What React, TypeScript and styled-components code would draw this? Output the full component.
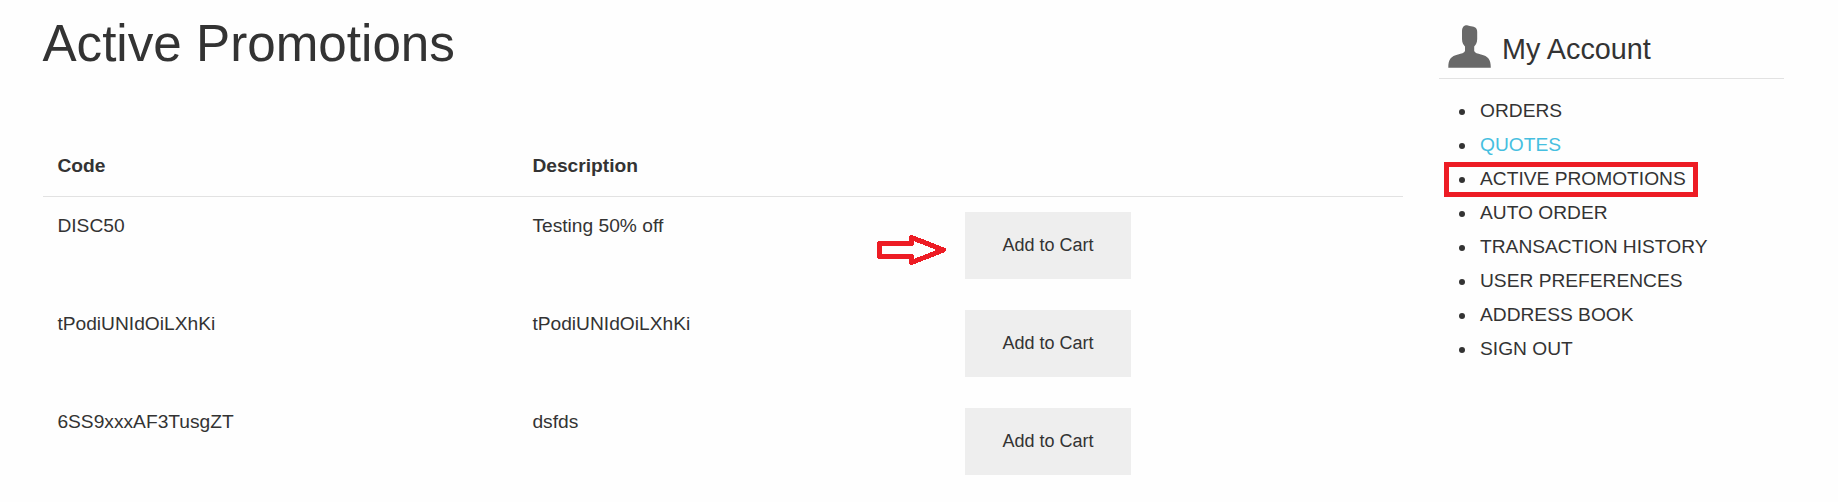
import React from "react";
import styled, { createGlobalStyle } from "styled-components";

const GlobalStyle = createGlobalStyle`
  *, *::before, *::after { box-sizing: border-box; }
  body {
    margin: 0;
    background: #fefefe;
    color: #333;
    font-family: Arial, "Liberation Sans", sans-serif;
    font-size: 19.2px;
  }
`;

const Page = styled.div`
  display: flex;
  align-items: flex-start;
  gap: 36px;
  width: 1838px;
  height: 502px;
  padding: 0 54px 0 43px;
  overflow: hidden;
`;

const Main = styled.main`
  width: 1360px;
`;

const Title = styled.h1`
  margin: 0 0 0 -0.6px;
  padding-top: 8px;
  font-size: 51.2px;
  font-weight: 400;
  line-height: 72px;
`;

const Table = styled.div`
  margin-top: 56px;
`;

const Row = styled.div`
  display: grid;
  grid-template-columns: 475px 1fr 438px;
  height: 98px;
  padding: 15px 0 0 14.4px;
  line-height: 27px;
`;

const HeadRow = styled(Row)`
  height: 61px;
  padding-top: 16px;
  border-bottom: 1px solid #e2e2e2;
  font-weight: 700;
`;

const ActionCell = styled.div`
  position: relative;
`;

const CartButton = styled.button`
  display: block;
  width: 166px;
  height: 67px;
  margin: 0;
  padding: 0 0 1px;
  border: 0;
  background: #eee;
  color: #333;
  font-family: inherit;
  font-size: 18px;
  line-height: 24px;
`;

const Arrow = styled.svg`
  position: absolute;
  left: -89px;
  top: 21px;
`;

const Sidebar = styled.aside`
  width: 345px;
`;

const AccountHeader = styled.header`
  display: flex;
  gap: 11px;
  height: 79px;
  padding: 25px 0 0 9px;
  border-bottom: 1px solid #e2e2e2;
`;

const AccountTitle = styled.h2`
  margin: 0;
  padding-top: 4px;
  font-size: 28.8px;
  font-weight: 400;
  line-height: 40px;
`;

const Menu = styled.ul`
  margin: 15px 0 0;
  padding: 0 0 0 20px;
  line-height: 34px;
  list-style: none;
`;

const MenuItem = styled.li<{ $hovered?: boolean }>`
  position: relative;
  display: flex;
  &::before {
    content: "";
    width: 6px;
    height: 6px;
    margin: 15px 15px 0 0;
    border-radius: 50%;
    background: #333;
  }
  a {
    color: ${(p) => (p.$hovered ? "#46bfe0" : "#333")};
    text-decoration: none;
  }
`;

const Highlight = styled.span`
  position: absolute;
  left: -15px;
  top: 0;
  width: 254px;
  height: 35px;
  border: 5px solid #ed1c24;
  pointer-events: none;
`;

const promotions = [
  { code: "DISC50", description: "Testing 50% off" },
  { code: "tPodiUNIdOiLXhKi", description: "tPodiUNIdOiLXhKi" },
  { code: "6SS9xxxAF3TusgZT", description: "dsfds" },
];

const links = [
  "ORDERS",
  "QUOTES",
  "ACTIVE PROMOTIONS",
  "AUTO ORDER",
  "TRANSACTION HISTORY",
  "USER PREFERENCES",
  "ADDRESS BOOK",
  "SIGN OUT",
];

const PersonIcon = () => (
  <svg width="43" height="43" viewBox="0 0 43 43" aria-hidden="true">
    <path
      d="M14 6 C14.3 2 16 0.3 19 0.3 C20.5 0.3 21 1.2 23 1.3 C27 1.6 29.2 3 29.2 7 V14 C29.2 18 27.5 20 26.2 21.5 V26 C27 28 29.5 28.6 33 29.5 C40 31.3 42.8 34 42.8 42.8 H0.3 C0.3 34 3 31.3 10 29.5 C13.5 28.6 16.2 28 17 26 V21.5 C15.7 20 14 18 14 14 Z"
      fill="#696969"
    />
  </svg>
);

const App = () => (
  <>
    <GlobalStyle />
    <Page>
      <Main>
        <Title>Active Promotions</Title>
        <Table>
          <HeadRow>
            <span>Code</span>
            <span>Description</span>
          </HeadRow>
          {promotions.map((promo, i) => (
            <Row key={promo.code}>
              <span>{promo.code}</span>
              <span>{promo.description}</span>
              <ActionCell>
                {i === 0 && (
                  <Arrow width="74" height="34" viewBox="0 0 74 34" shapeRendering="crispEdges">
                    <path
                      d="M3.5 10.5 H35.5 V4.5 L67.5 17 L35.5 29.5 V23.5 H3.5 Z"
                      fill="none"
                      stroke="#ed1c24"
                      strokeWidth="5"
                      strokeLinejoin="round"
                    />
                  </Arrow>
                )}
                <CartButton>Add to Cart</CartButton>
              </ActionCell>
            </Row>
          ))}
        </Table>
      </Main>
      <Sidebar>
        <AccountHeader>
          <PersonIcon />
          <AccountTitle>My Account</AccountTitle>
        </AccountHeader>
        <Menu>
          {links.map((label) => (
            <MenuItem key={label} $hovered={label === "QUOTES"}>
              <a>{label}</a>
              {label === "ACTIVE PROMOTIONS" && <Highlight />}
            </MenuItem>
          ))}
        </Menu>
      </Sidebar>
    </Page>
  </>
);

export default App;
